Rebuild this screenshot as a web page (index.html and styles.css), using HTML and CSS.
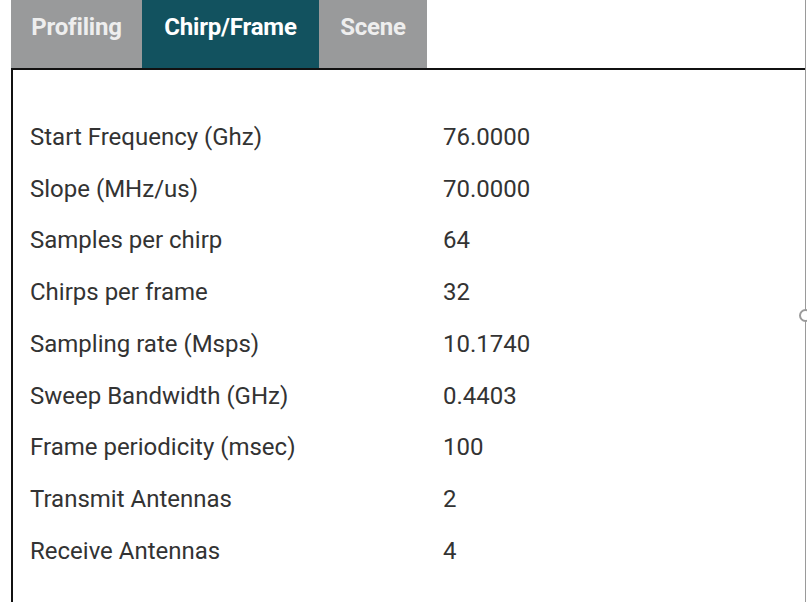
FILE: index.html
```html
<!DOCTYPE html>
<html>
<head>
<meta charset="utf-8">
<link rel="stylesheet" href="styles.css">
</head>
<body>
<div class="page">
  <div class="main">
    <div class="tabs">
      <div class="tab tab-profiling">Profiling</div>
      <div class="tab tab-active tab-chirp">Chirp/Frame</div>
      <div class="tab tab-scene">Scene</div>
    </div>
    <div class="panel">
      <div class="grid">
        <div class="label">Start Frequency (Ghz)</div><div class="value">76.0000</div>
        <div class="label">Slope (MHz/us)</div><div class="value">70.0000</div>
        <div class="label">Samples per chirp</div><div class="value">64</div>
        <div class="label">Chirps per frame</div><div class="value">32</div>
        <div class="label">Sampling rate (Msps)</div><div class="value">10.1740</div>
        <div class="label">Sweep Bandwidth (GHz)</div><div class="value">0.4403</div>
        <div class="label">Frame periodicity (msec)</div><div class="value">100</div>
        <div class="label">Transmit Antennas</div><div class="value">2</div>
        <div class="label">Receive Antennas</div><div class="value">4</div>
      </div>
    </div>
  </div>
  <div class="divider"><span class="handle"></span></div>
</div>
</body>
</html>
```
FILE: styles.css
```css
html, body {
  margin: 0;
  padding: 0;
  background: #ffffff;
  overflow: hidden;
}
.page {
  display: flex;
  width: 807px;
  height: 602px;
  font-family: Roboto, "Liberation Sans", sans-serif;
}
.main {
  width: 794px;
  padding-left: 11px;
  display: flex;
  flex-direction: column;
}
.tabs {
  display: flex;
  height: 68px;
}
.tab {
  display: flex;
  align-items: center;
  justify-content: center;
  background: #999a9b;
  color: #eeeeee;
  font-weight: 700;
  font-size: 24px;
  letter-spacing: -0.2px;
  padding-bottom: 14px;
  box-sizing: border-box;
}
.tab-profiling { width: 131px; }
.tab-chirp { width: 177px; }
.tab-scene { width: 108px; }
.tab-active {
  background: #12525f;
  color: #ffffff;
}
.panel {
  flex: 1;
  border-top: 2px solid #111111;
  border-left: 2px solid #111111;
  padding: 41px 0 0 17px;
}
.grid {
  display: grid;
  grid-template-columns: 413px 1fr;
  grid-auto-rows: 51.75px;
  align-items: center;
  font-size: 24px;
  color: #333333;
}
.divider {
  position: relative;
  width: 1px;
  background: #9a9a9a;
  height: 602px;
}
.handle {
  position: absolute;
  left: -6px;
  top: 309px;
  width: 9px;
  height: 9px;
  border: 2px solid #9a9a9a;
  border-radius: 50%;
  background: #ffffff;
}
```
